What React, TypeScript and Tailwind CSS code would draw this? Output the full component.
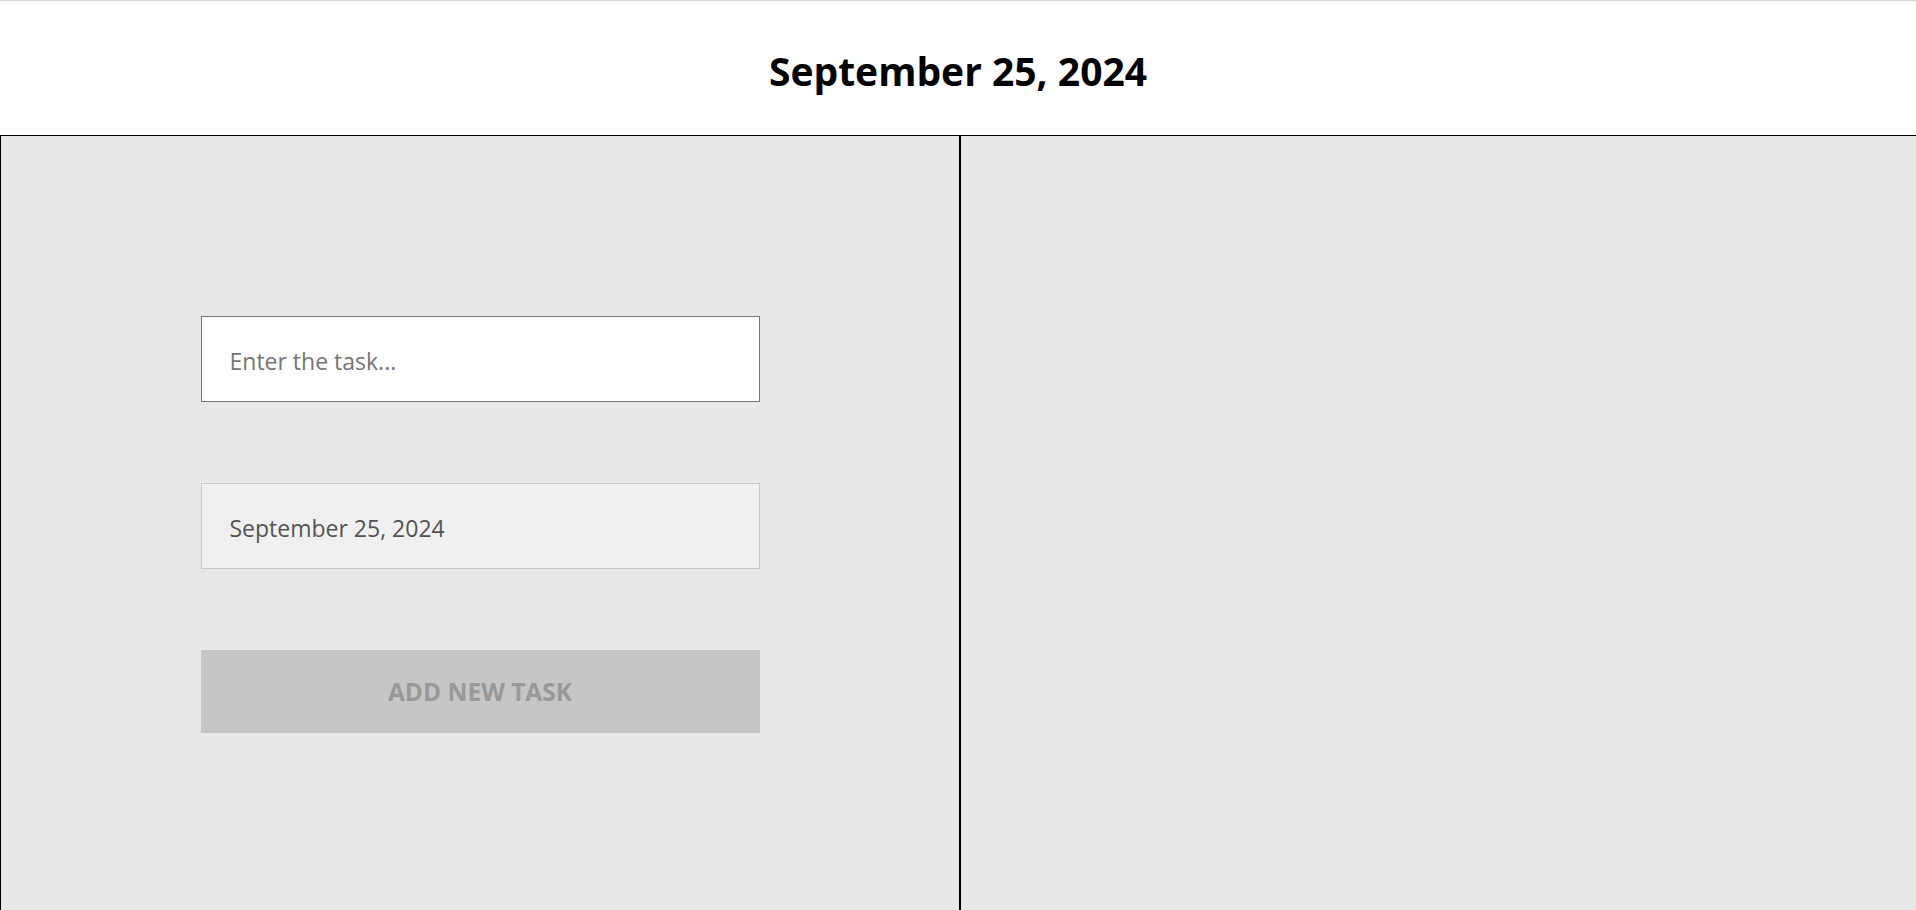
import { useState } from 'react'

export default function App() {
  const hoje = 'September 25, 2024'
  const [tarefa, setTarefa] = useState('')

  return (
    <div className="h-screen overflow-hidden bg-white font-['Open_Sans',sans-serif] text-black">
      {/* Cabeçalho */}
      <header className="flex h-[136px] items-center justify-center border-t border-b border-t-[#d4d4d4] border-b-black pt-[4px]">
        <h1 className="text-[39px] font-bold leading-none">{hoje}</h1>
      </header>

      <main className="flex h-[774px]">
        {/* Formulário */}
        <section className="flex w-[960px] shrink-0 flex-col items-center border-x border-black bg-[#e8e8e8] pt-[180px]">
          <div className="flex w-[559px] flex-col gap-[81px]">
            <input
              type="text"
              value={tarefa}
              onChange={(e) => setTarefa(e.target.value)}
              placeholder="Enter the task..."
              className="h-[86px] w-full border border-[#767676] bg-white pl-[28px] pt-[4px] text-[23px] text-[#333] placeholder-[#757575] outline-none"
            />
            <input
              type="text"
              disabled
              value={hoje}
              className="h-[86px] w-full border border-[#c8c8c8] bg-[#f0f0f0] pl-[28px] pt-[4px] text-[23px] text-[#545454] outline-none"
            />
            <button
              disabled
              className="h-[83px] w-full bg-[#c6c6c6] pt-[2px] text-[24.5px] font-bold uppercase text-[#999999]"
            >
              Add new task
            </button>
          </div>
        </section>

        {/* Lista */}
        <section className="w-[960px] shrink-0 border-x border-black bg-[#e8e8e8]" />
      </main>
    </div>
  )
}
